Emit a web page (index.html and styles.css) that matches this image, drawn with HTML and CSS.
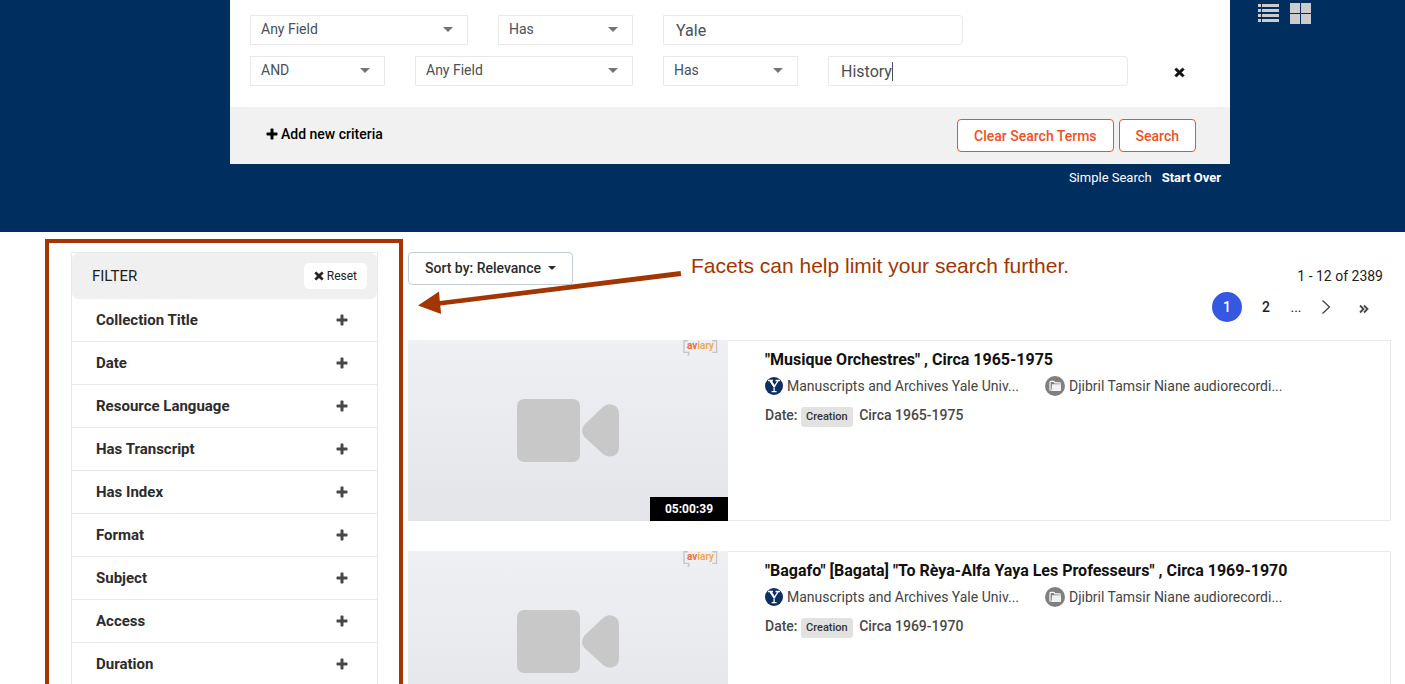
FILE: index.html
```html
<!DOCTYPE html>
<html lang="en">
<head>
<meta charset="utf-8">
<title>Advanced Search</title>
<link rel="stylesheet" href="styles.css">
</head>
<body>
<svg class="defs" aria-hidden="true">
  <symbol id="plus" viewBox="0 0 12 12"><path d="M4.5 1.2q0-.7.7-.7h1.6q.7 0 .7.7v3.3h3.3q.7 0 .7.7v1.6q0 .7-.7.7H7.500v3.300q0 .7-.7.7H5.200q-.7 0-.7-.7V7.500H1.200q-.7 0-.7-.7V5.200q0-.7.7-.7h3.300z"/></symbol>
  <symbol id="cross" viewBox="0 0 12 12"><path d="M2.600 1 6 4 9.400 1 11.200 2.800 8.100 6l3.100 3.200L9.400 11 6 8 2.600 11 .8 9.200 3.900 6 .8 2.800z" stroke="currentColor" stroke-width=".6" stroke-linejoin="round"/></symbol>
  <symbol id="camera" viewBox="0 0 102 64"><rect width="63" height="63" rx="7"/><path d="M67.500 25.500 86 8q4-3.500 8-2.500 8 1 8 9.500v33q0 8.500-8 9.500-4 .5-8-2.500L67.500 38q-5-6 0-12.500z"/></symbol>
  <symbol id="yale" viewBox="0 0 18 18"><circle cx="9" cy="9" r="9" fill="#0b2f63"/><path d="M3 3.500h5M10.500 3.500h4.500M5 3.700l4.100 6.300 4-6.300M9.100 9.800v5M6.600 14.700h5" fill="none" stroke="#fff" stroke-width="1.300"/><path d="M5.700 3.700l4 6.100" stroke="#fff" stroke-width="1.800"/></symbol>
  <symbol id="folder" viewBox="0 0 20 20"><circle cx="10" cy="10" r="10" fill="#808080"/><path d="M5 14.500V6.300q0-1 1-1h2.800l1.200 1.500h4.500q.9 0 .9.900" fill="none" stroke="#fff" stroke-width="1.200"/><path d="M7 8.300h9v5.800q0 .9-.9.900H5.200q1.500-.5 1.500-2z" fill="#f2f2f2"/></symbol>
  <symbol id="brackets" viewBox="0 0 36 16"><path d="M5 .5H1v12h5v2.500l-1.500.5M30 .5h4.500v12H30" fill="none" stroke="#c4c4c4" stroke-width="1.400"/></symbol>
</svg>

<header class="hero">
  <div class="hero-main">
    <form class="criteria">
      <div class="rows">
        <div class="row">
          <span class="pick wide"><select aria-label="Field"><option>Any Field</option></select></span>
          <span class="pick"><select aria-label="Match"><option>Has</option></select></span>
          <span class="term"><input type="text" aria-label="Search term" value="Yale"></span>
        </div>
        <div class="row">
          <span class="pick"><select aria-label="Operator"><option>AND</option></select></span>
          <span class="pick wide"><select aria-label="Second field"><option>Any Field</option></select></span>
          <span class="pick"><select aria-label="Second match"><option>Has</option></select></span>
          <span class="term"><input type="text" aria-label="Second search term" value="History"><i class="caret"></i></span>
          <button type="button" class="remove" aria-label="Remove"><svg><use href="#cross"/></svg></button>
        </div>
      </div>
      <div class="criteria-foot">
        <button type="button" class="add"><svg><use href="#plus"/></svg>Add new criteria</button>
        <div class="actions">
          <button type="button" class="outline">Clear Search Terms</button>
          <button type="button" class="outline">Search</button>
        </div>
      </div>
    </form>
    <nav class="links"><a href="#">Simple Search</a><a href="#" class="strong">Start Over</a></nav>
  </div>
  <div class="views">
    <button type="button" aria-label="List view"><svg viewBox="0 0 21 21"><path d="M0 1h3v3H0zM4 1h17v3H4zM0 6h3v3H0zM4 6h17v3H4zM0 11h3v3H0zM4 11h17v3H4zM0 16h3v3H0zM4 16h17v3H4z"/></svg></button>
    <button type="button" aria-label="Grid view"><svg viewBox="0 0 21 21"><path d="M0 0h10v10H0zM11 0h10v10H11zM0 11h10v10H0zM11 11h10v10H11z"/></svg></button>
  </div>
</header>

<main class="content">
  <aside class="highlight">
    <div class="filter">
      <div class="filter-head"><h2>FILTER</h2><button type="button" class="reset"><svg><use href="#cross"/></svg>Reset</button></div>
      <button type="button" class="facet">Collection Title<svg><use href="#plus"/></svg></button>
      <button type="button" class="facet">Date<svg><use href="#plus"/></svg></button>
      <button type="button" class="facet">Resource Language<svg><use href="#plus"/></svg></button>
      <button type="button" class="facet">Has Transcript<svg><use href="#plus"/></svg></button>
      <button type="button" class="facet">Has Index<svg><use href="#plus"/></svg></button>
      <button type="button" class="facet">Format<svg><use href="#plus"/></svg></button>
      <button type="button" class="facet">Subject<svg><use href="#plus"/></svg></button>
      <button type="button" class="facet">Access<svg><use href="#plus"/></svg></button>
      <button type="button" class="facet">Duration<svg><use href="#plus"/></svg></button>
    </div>
  </aside>

  <section class="results">
    <div class="toolbar">
      <button type="button" class="sort">Sort by: Relevance</button>
      <p class="note">Facets can help limit your search further.</p>
      <div class="paging">
        <p>1 - 12 of 2389</p>
        <nav class="pages">
          <a href="#" class="current">1</a><a href="#">2</a><span>...</span>
          <a href="#" aria-label="Next"><svg viewBox="0 0 10 16"><path d="M1.500 1.500 8.500 8l-7 6.500"/></svg></a>
          <a href="#" aria-label="Last"><svg class="last" viewBox="0 0 10 10"><path d="M1 1.500 4.500 5 1 8.500M5 1.500 8.500 5 5 8.500"/></svg></a>
        </nav>
      </div>
      <svg class="arrow" viewBox="0 0 264 46" aria-hidden="true"><path d="M0 34.500 21 20.500l.8 9.500L262.500 0l.8 5L22.300 34.500l.8 8.500z"/></svg>
    </div>

    <article class="card">
      <div class="thumb">
        <span class="logo"><svg><use href="#brackets"/></svg><b>av</b>iary</span>
        <svg class="camera"><use href="#camera"/></svg>
        <span class="time">05:00:39</span>
      </div>
      <div class="info">
        <h3>"Musique Orchestres" , Circa 1965-1975</h3>
        <div class="meta">
          <a href="#" class="org"><svg class="yale"><use href="#yale"/></svg>Manuscripts and Archives Yale Univ...</a>
          <a href="#"><svg class="folder"><use href="#folder"/></svg>Djibril Tamsir Niane audiorecordi...</a>
        </div>
        <p class="date">Date: <span class="tag">Creation</span> Circa 1965-1975</p>
      </div>
    </article>

    <article class="card">
      <div class="thumb">
        <span class="logo"><svg><use href="#brackets"/></svg><b>av</b>iary</span>
        <svg class="camera"><use href="#camera"/></svg>
      </div>
      <div class="info">
        <h3>"Bagafo" [Bagata] "To Rèya-Alfa Yaya Les Professeurs" , Circa 1969-1970</h3>
        <div class="meta">
          <a href="#" class="org"><svg class="yale"><use href="#yale"/></svg>Manuscripts and Archives Yale Univ...</a>
          <a href="#"><svg class="folder"><use href="#folder"/></svg>Djibril Tamsir Niane audiorecordi...</a>
        </div>
        <p class="date">Date: <span class="tag">Creation</span> Circa 1969-1970</p>
      </div>
    </article>
  </section>
</main>
</body>
</html>
```
FILE: styles.css
```css
* { box-sizing: border-box; }
body { margin: 0; font-family: Roboto, "Liberation Sans", sans-serif; font-size: 14px; line-height: 20px; color: #212121; background: #fff; }
button, input, select { font: inherit; color: inherit; margin: 0; }
button { cursor: pointer; background: none; border: 0; padding: 0; }
a { color: inherit; text-decoration: none; }
h2, h3, p { margin: 0; }
svg { display: block; fill: currentColor; flex: none; }
.defs { position: absolute; width: 0; height: 0; }

.hero { display: grid; grid-template-columns: minmax(0, 1fr) 175px; padding: 0 0 44px 230px; background: #002f5f; }
.criteria { background: #fff; }
.rows { display: flex; flex-direction: column; gap: 11px; padding: 15px 20px 21px; }
.row { display: flex; align-items: center; gap: 30px; }
.pick { position: relative; width: 135px; }
.pick.wide { width: 218px; }
.pick::after { content: ""; position: absolute; top: 12px; right: 15px; border: 5px solid transparent; border-top-color: #757575; border-bottom: 0; pointer-events: none; }
.pick select { display: block; width: 100%; height: 30px; padding: 0 10px 2px; appearance: none; color: #495057; background: #fff; border: 1px solid #e9e9e9; border-radius: 0; }
.term { position: relative; width: 300px; }
.term input { display: block; width: 100%; height: 30px; padding: 1px 12px 0; font-size: 16px; color: #495057; background: #fff; border: 1px solid #e9e9e9; border-radius: 0 4px 4px 0; }
.caret { position: absolute; left: 64px; top: 6px; width: 1px; height: 19px; background: #495057; }
.remove { margin-left: 16px; padding-top: 2px; color: #111; }
.remove svg { width: 11px; height: 11px; }
.criteria-foot { display: flex; align-items: center; justify-content: space-between; padding: 12px 34px 12px 36px; background: #f1f1f1; }
.add { display: flex; align-items: center; gap: 3px; padding-bottom: 3px; font-weight: 500; color: #000; }
.add svg { width: 12px; height: 12px; }
.actions { display: flex; gap: 5px; }
.outline { height: 33px; padding: 0 16px; font-weight: 500; color: #f05123; background: #fff; border: 1px solid #f05123; border-radius: 4px; }
.links { display: flex; justify-content: flex-end; gap: 10px; padding: 4px 9px 0 0; font-size: 13px; color: #fff; }
.strong { font-weight: 700; }
.views { display: flex; align-items: flex-start; gap: 11px; padding: 3px 0 0 28px; color: #ccc; }
.views svg { width: 21px; height: 21px; }

.content { display: grid; grid-template-columns: 358px minmax(0, 1fr); gap: 5px; padding: 7px 14px 0 45px; }
.highlight { padding: 9px 21px 20px 22px; border: 4px solid #a33600; }
.filter { border: 1px solid #e9e9e9; }
.filter-head { display: flex; align-items: center; justify-content: space-between; height: 46px; padding: 0 10px 0 20px; background: #f0f0f0; border-radius: 6px; }
.filter-head h2 { font-size: 15px; font-weight: 400; }
.reset { display: flex; align-items: center; gap: 3px; height: 26px; padding: 0 10px; font-size: 12px; background: #fff; border-radius: 5px; }
.reset svg { width: 10px; height: 10px; }
.facet { display: flex; align-items: center; justify-content: space-between; width: 100%; height: 43px; padding: 0 29px 0 24px; font-size: 15px; font-weight: 700; color: #2c2c2c; border-bottom: 1px solid #e9e9e9; }
.facet svg { width: 12px; height: 12px; color: #484848; }

.results { display: flex; flex-direction: column; gap: 30px; padding-bottom: 30px; }
.toolbar { position: relative; display: flex; align-items: flex-start; height: 71px; padding: 13px 8px 0 0; }
.sort { display: flex; align-items: center; gap: 7px; height: 33px; padding: 0 16px 2px; font-weight: 500; color: #2c2c2c; background: #fff; border: 1px solid #c3ccd6; border-radius: 4px; }
.sort::after { content: ""; border: 4px solid transparent; border-top-color: currentColor; border-bottom: 0; }
.note { margin-left: 118px; padding-top: 2px; font-family: "Liberation Sans", Arial, sans-serif; font-size: 21px; line-height: 24px; color: #a33600; }
.arrow { position: absolute; left: 10px; top: 32px; width: 264px; height: 46px; color: #a33600; }
.paging { display: flex; flex-direction: column; gap: 6px; margin-left: auto; padding-top: 14px; text-align: right; }
.pages { display: flex; align-items: center; justify-content: flex-end; padding-right: 4px; }
.pages a, .pages span { display: grid; place-items: center; width: 30px; height: 30px; }
.pages a { font-weight: 500; }
.pages a:nth-child(2) { margin-left: 9px; }
.pages a:last-child { margin-left: 8px; }
.pages svg { width: 10px; height: 16px; fill: none; stroke: #444; stroke-width: 1.300; }
.pages .last { width: 10px; height: 10px; margin-top: 4px; stroke-width: 1.800; }
.pages .current { color: #fff; background: #3459e0; border-radius: 50%; }

.card { display: grid; grid-template-columns: 320px minmax(0, 1fr); min-height: 181px; }
.thumb { position: relative; display: grid; place-items: center; background: linear-gradient(#eff0f4, #e4e5e9); }
.camera { width: 102px; height: 64px; color: #c8c8c8; }
.logo { position: absolute; top: 0; right: 10px; width: 35px; font-size: 10px; line-height: 12px; font-weight: 500; text-align: center; color: #f3a044; }
.logo svg { position: absolute; top: 0; left: 0; width: 35px; height: 16px; }
.logo b { font-weight: 700; color: #ee6c3c; }
.time { position: absolute; right: 0; bottom: 0; width: 78px; line-height: 24px; font-size: 12px; font-weight: 700; text-align: center; color: #fff; background: #000; }
.info { padding: 9px 37px; border: 1px solid #e9e9e9; border-left: 0; }
.info h3 { font-size: 16px; font-weight: 700; line-height: 20px; color: #111; }
.meta { display: flex; gap: 26px; padding-top: 6px; color: #444; }
.meta a { display: flex; align-items: center; gap: 4px; white-space: nowrap; }
.org { width: 254px; }
.yale { width: 18px; height: 18px; }
.folder { width: 20px; height: 20px; }
.date { padding-top: 9px; font-weight: 500; color: #484848; }
.tag { display: inline-block; margin-right: 3px; padding: 0 5px; font-size: 11px; color: #333; background: #e2e2e2; border-radius: 3px; }
```
